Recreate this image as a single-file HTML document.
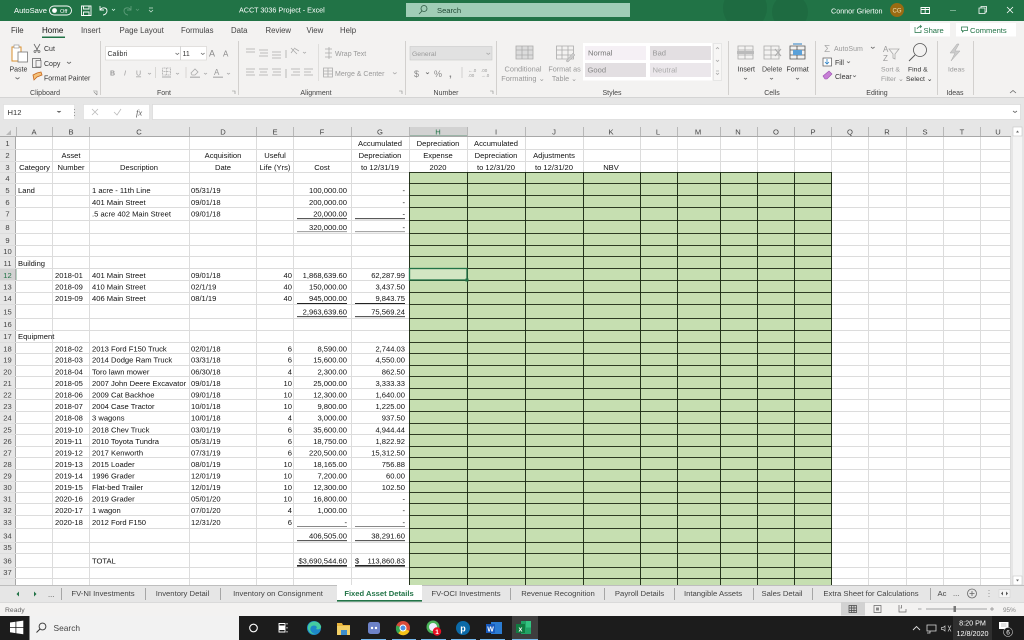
<!DOCTYPE html>
<html><head><meta charset="utf-8"><title>ACCT 3036 Project - Excel</title>
<style>
html,body{margin:0;padding:0;background:#fff}
svg{display:block;filter:blur(.35px)}
text{font-family:"Liberation Sans",sans-serif;font-size:7.6px;fill:#111}
.e{text-anchor:end}.m{text-anchor:middle}
.h text{fill:#444;text-anchor:middle;font-size:7.6px}
.rb text{fill:#333;font-size:7px}
.rb .d{fill:#999}
.gl text{fill:#444;text-anchor:middle;font-size:7px}
.tb text{fill:#444;text-anchor:middle;font-size:7.7px}
.ic{fill:none;stroke:#666;stroke-width:.8}
.dis{fill:none;stroke:#aaa;stroke-width:.8}
</style></head><body>
<svg width="1024" height="640" viewBox="0 0 1024 640" xmlns="http://www.w3.org/2000/svg">
<!-- backgrounds -->
<rect width="1024" height="640" fill="#fff"/>
<rect width="1024" height="21" fill="#217346"/>
<circle cx="745" cy="8" r="22" fill="#1e6b41"/><circle cx="790" cy="12" r="18" fill="#1e6b41"/>
<rect y="21" width="1024" height="76" fill="#f3f2f1"/>
<rect y="97" width="1024" height="40" fill="#e6e6e6"/>
<rect y="97" width="1024" height="1" fill="#d4d4d4"/>

<!-- title bar -->
<text x="14" y="13" style="fill:#fff;font-size:7.6px">AutoSave</text>
<rect x="49.5" y="6" width="22" height="9" rx="4.5" fill="none" stroke="#fff" stroke-width=".9"/>
<circle cx="54.5" cy="10.5" r="2.4" fill="#fff"/>
<text x="60" y="12.8" style="fill:#fff;font-size:5.6px">Off</text>
<path d="M81.5 6h9.500v9.500h-9.500zM83.500 6v3h5.500V6M83.500 15.500v-3.500h5.500v3.500" fill="none" stroke="#fff" stroke-width=".9"/>
<path d="M100 6v4h4M100 10c2-3 7-3 7 1 0 2-2 4-4 4" fill="none" stroke="#fff" stroke-width=".9"/>
<path d="M112 9l1.500 1.500 1.500-1.500" fill="none" stroke="#dfe" stroke-width=".7"/>
<path d="M131 6v4h-4M131 10c-2-3-7-3-7 1 0 2 2 4 4 4" fill="none" stroke="#5d9c79" stroke-width=".9"/>
<path d="M136 9l1.500 1.500 1.500-1.500" fill="none" stroke="#5d9c79" stroke-width=".7"/>
<path d="M149 8h4M149 10l2 2 2-2" fill="none" stroke="#cfe6d8" stroke-width=".7"/>
<text x="239" y="12.500" style="fill:#fff;font-size:7.2px">ACCT 3036 Project  -  Excel</text>
<rect x="406" y="3" width="224" height="14" fill="#a0cdb6"/>
<circle cx="424" cy="8.500" r="3" fill="none" stroke="#2d5a43" stroke-width=".8"/><path d="M422 11l-3 3" stroke="#2d5a43" stroke-width=".8"/>
<text x="437" y="13" style="fill:#234a36;font-size:7.6px">Search</text>
<text x="831" y="13.500" style="fill:#fff;font-size:7.200px">Connor Grierton</text>
<circle cx="897" cy="10" r="7" fill="#9a6b12"/>
<text x="897" y="12.500" class="m" style="fill:#f0e0b0;font-size:6px">CG</text>
<path d="M921 7.500h8.500v6H921zM925.200 7.500v6M921 9.500h8.500" fill="none" stroke="#fff" stroke-width=".9"/>
<path d="M950 10.500h6" stroke="#8fbfa3" stroke-width=".8"/>
<path d="M979 8h6v5.500h-6zM981 8V6.500h5.500V12H985" fill="none" stroke="#fff" stroke-width=".8"/>
<path d="M1007 7l6 6M1013 7l-6 6" stroke="#fff" stroke-width=".8"/>

<!-- menu tabs -->
<text x="11" y="33" style="font-size:7.800px;fill:#333">File</text>
<text x="42" y="33" style="font-size:8px;fill:#111">Home</text>
<text x="81" y="33" style="font-size:7.800px;fill:#444">Insert</text>
<text x="119.500" y="33" style="font-size:7.900px;fill:#444">Page Layout</text>
<text x="181" y="33" style="font-size:7.800px;fill:#444">Formulas</text>
<text x="231" y="33" style="font-size:7.800px;fill:#444">Data</text>
<text x="265.500" y="33" style="font-size:7.800px;fill:#444">Review</text>
<text x="306.500" y="33" style="font-size:7.800px;fill:#444">View</text>
<text x="340" y="33" style="font-size:7.800px;fill:#444">Help</text>
<rect x="42" y="36.500" width="23" height="1.500" fill="#217346"/>
<rect x="910" y="23" width="40" height="13.500" fill="#fff"/>
<path d="M915 27v5.500h6V30M917 29c1-2 2-2.500 4-2.500M920 25l1.500 1.500-1.500 1.500" fill="none" stroke="#217346" stroke-width=".7"/>
<text x="923.500" y="33" style="fill:#217346;font-size:7.600px">Share</text>
<rect x="956" y="23" width="60" height="13.500" fill="#fff"/>
<path d="M961.500 27h6v3.500h-3.500l-1.500 1.500v-1.500h-1z" fill="none" stroke="#217346" stroke-width=".7"/>
<text x="970" y="33" style="fill:#217346;font-size:7.600px">Comments</text>

<!-- ribbon separators -->
<path d="M100.500 41v54M238.500 41v54M405.500 41v54M496.500 41v54M728.500 41v54M815.500 41v54M937.500 41v54M973.500 41v54" stroke="#d2d0ce"/>
<g class="gl">
<text x="45" y="95">Clipboard</text><text x="164" y="95">Font</text><text x="316" y="95">Alignment</text><text x="446" y="95">Number</text>
<text x="612" y="95">Styles</text><text x="772" y="95">Cells</text><text x="877" y="95">Editing</text><text x="955" y="95">Ideas</text>
</g>
<path d="M93 91h4v4M94 92l3 3M232 91h3v3M399 91h3v3M490 91h3v3" fill="none" stroke="#888" stroke-width=".6"/>
<path d="M1010 93l3-2.500 3 2.500" fill="none" stroke="#666" stroke-width=".8"/>

<g class="rb">
<!-- clipboard -->
<path d="M12 47h9v14h-9z" fill="#fff" stroke="#d98f2c"/><rect x="14" y="45" width="5" height="3" fill="#fff" stroke="#888" stroke-width=".6"/>
<rect x="18" y="52" width="9.500" height="10" fill="#fff" stroke="#777" stroke-width=".8"/>
<text x="9.500" y="71.500">Paste</text><path d="M15.500 77.500l2 1.500 2-1.500" class="ic"/>
<path d="M34 44l4 7M40 44l-4 7" class="ic"/><circle cx="35" cy="51.500" r="1" class="ic"/><circle cx="39" cy="51.500" r="1" class="ic"/>
<text x="44" y="51">Cut</text>
<rect x="32.500" y="58.500" width="8" height="9" class="ic"/><rect x="36" y="60.500" width="5" height="6.500" fill="#f3f2f1" stroke="#666" stroke-width=".7"/>
<text x="44" y="66">Copy</text><path d="M67 62l2 1.500 2-1.500" class="ic"/>
<path d="M33 75l4-2 4-1 1 3-5 2-3 3z" fill="#f5c27a" stroke="#c7661c" stroke-width=".8"/>
<text x="44" y="80.500">Format Painter</text>
<!-- font -->
<rect x="105.500" y="46.500" width="101" height="13.500" fill="#fff" stroke="#d2d0ce" stroke-width=".6"/>
<text x="107.500" y="56" style="fill:#333">Calibri</text><path d="M175.500 53l1.800 1.500 1.800-1.500" class="ic"/>
<path d="M180.500 46.500v13.500" stroke="#bbb" stroke-width=".6"/>
<text x="182.500" y="56" style="fill:#333">11</text><path d="M201 53l1.800 1.500 1.800-1.500" class="ic"/>
<text x="209" y="56.500" style="font-size:9px;fill:#888">A</text><text x="223" y="56.500" style="font-size:8px;fill:#888">A</text>
<text x="110" y="75.500" style="font-weight:bold" class="d">B</text><text x="124" y="75.500" style="font-style:italic" class="d">I</text><text x="136" y="75.500" class="d" style="text-decoration:underline">U</text>
<path d="M148 73l1.500 1.200 1.500-1.200M176 73l1.500 1.200 1.500-1.200M204 73l1.500 1.200 1.500-1.200M227 73l1.500 1.200 1.500-1.200" class="dis"/>
<path d="M155.500 67v11M186 67v11" stroke="#d2d0ce" stroke-width=".8"/>
<path d="M162.500 68h8v7h-8zM162.500 71.500h8M166.500 68v7" class="dis" stroke-dasharray="1 .5"/><path d="M162 77h9" stroke="#aaa"/>
<path d="M191 73l4-4 3 3-3 3h-3z" class="dis"/><rect x="190" y="76.500" width="10" height="1.500" fill="#bbb"/>
<text x="214" y="75" class="d" style="font-size:8px">A</text><rect x="213" y="76.500" width="10" height="1.500" fill="#bbb"/>
<!-- alignment -->
<path d="M246 49h9M246 52h9M259 50h9M260 53h8M259 56h9M272 52h9M272 55h9M272 58h9M246 69h9M246 72h8M246 75h9M259 69h9M260 72h7M259 75h9M272 69h9M273 72h8M272 75h9M286 50v8M286 69v9" class="dis"/>
<path d="M291 48l6 6M294 48l5 3M291 53l3-4" class="dis"/><path d="M303 52l1.500 1.200 1.500-1.200" class="dis"/>
<path d="M291 69h9M293 72h7M291 75h9M304 69h9M304 72h7M304 75h9" class="dis"/>
<path d="M318.500 44v37" stroke="#d2d0ce" stroke-width=".6"/>
<path d="M325 49h7M325 53h7M325 57h7M329 47v12" class="dis"/>
<text x="335" y="56" class="d">Wrap Text</text>
<path d="M323.500 68h9v9h-9zM323.500 71h9M323.500 74h9M328 68v9" class="dis"/>
<text x="335" y="76" class="d">Merge &amp; Center</text><path d="M393 72.500l1.800 1.400 1.800-1.400" class="dis"/>
<!-- number -->
<rect x="410" y="46.500" width="82" height="13.500" fill="#e1e1e1" stroke="#c8c8c8" stroke-width=".6"/>
<text x="412" y="56" class="d" style="font-size:6.800px">General</text><path d="M486.500 53l1.800 1.400 1.800-1.400" class="dis"/>
<text x="414" y="77" style="font-size:9px;fill:#888">$</text><path d="M426 72.500l1.500 1.200 1.500-1.200" class="ic"/>
<text x="434" y="77" style="font-size:9px;fill:#888">%</text><text x="449" y="77" style="font-size:10px;fill:#888;font-weight:bold">,</text>
<path d="M462 67v11" stroke="#d2d0ce"/><text x="468" y="72" class="d" style="font-size:4.500px">←.0</text><text x="468" y="77" class="d" style="font-size:4.500px">.00</text><text x="481" y="72" class="d" style="font-size:4.500px">.00</text><text x="481" y="77" class="d" style="font-size:4.500px">→.0</text>
<!-- conditional, table -->
<path d="M516 46h17v13h-17zM516 50h17M516 55h17M522 46v13M528 46v13" fill="#dcdcdc" stroke="#aaa" stroke-width=".8"/>
<path d="M556.500 46h17v13h-17zM556.500 50h17M556.500 55h17M562 46v13M568 46v13" fill="none" stroke="#aaa" stroke-width=".8"/><path d="M566 61l7-8 2 2-7 7z" fill="#ccc" stroke="#aaa" stroke-width=".5"/>
<text x="523" y="71.500" class="d" style="text-anchor:middle;font-size:7.400px">Conditional</text>
<text x="523" y="81" class="d" style="text-anchor:middle;font-size:7.400px">Formatting ⌄</text>
<text x="564.500" y="71.500" class="d" style="text-anchor:middle;font-size:7.200px">Format as</text>
<text x="564.500" y="81" class="d" style="text-anchor:middle;font-size:7.200px">Table ⌄</text>
<!-- styles gallery -->
<rect x="583" y="43" width="129" height="37.500" fill="#fff"/>
<rect x="585" y="46" width="61" height="14" fill="#f5f0f5"/><rect x="650" y="46" width="61" height="14" fill="#e3dfe2"/>
<rect x="585" y="63" width="61" height="14" fill="#e3dfe2"/><rect x="650" y="63" width="61" height="14" fill="#ebe7eb"/>
<text x="588" y="55.500" style="font-size:7.600px;fill:#777">Normal</text><text x="652.500" y="55.500" style="font-size:7.600px;fill:#999">Bad</text>
<text x="587.500" y="72.500" style="font-size:7.600px;fill:#888">Good</text><text x="652.500" y="72.500" style="font-size:7.600px;fill:#aaa">Neutral</text>
<rect x="713.500" y="43.500" width="8" height="37" fill="#f7f6f5" stroke="#ddd" stroke-width=".6"/>
<path d="M716 49l1.500-1.500 1.500 1.500M716 60l1.500 1.500L719 60M716 71h3M716 73l1.500 1.500L719 73" class="dis"/>
<!-- cells -->
<path d="M738 46h15v13h-15zM738 50h15M738 55h15M745 46v13" fill="none" stroke="#aaa" stroke-width=".8"/><path d="M737 52.500h17" stroke="#bbb" stroke-width="3"/>
<path d="M764 46h15v13h-15zM764 50h15M764 55h15M771 46v13" fill="none" stroke="#aaa" stroke-width=".8"/><path d="M775 49l6 7M781 49l-6 7" stroke="#aaa"/>
<path d="M790 46h15v13h-15zM790 50h15M790 55h15M797 46v13" fill="none" stroke="#555" stroke-width=".8"/><rect x="793" y="50" width="9" height="5" fill="#5aa0d8"/><path d="M793 44h9" stroke="#2a7fc4"/>
<text x="737.500" y="71.500" style="fill:#333">Insert</text><text x="762" y="71.500" style="fill:#444">Delete</text><text x="786.500" y="71.500" style="fill:#333">Format</text>
<path d="M744 78l1.500 1.200 1.500-1.200M770 78l1.500 1.200 1.500-1.200M796 78l1.500 1.200 1.500-1.200" class="ic"/>
<!-- editing -->
<text x="824" y="52" style="font-size:10px;fill:#aaa">Σ</text><text x="834" y="51" class="d">AutoSum</text><path d="M871 47l1.800 1.400 1.800-1.400" class="ic"/>
<rect x="823" y="58" width="8.500" height="8" fill="#fff" stroke="#555" stroke-width=".7"/><path d="M827 59v5M825 62l2 2 2-2" fill="none" stroke="#2a7fc4" stroke-width=".8"/>
<text x="835" y="65" style="fill:#333">Fill</text><path d="M847 61.500l1.500 1.200 1.500-1.200" class="ic"/>
<path d="M823 76l6-5 3 3-5 5h-2z" fill="#c77fd6" stroke="#9a4fb0" stroke-width=".6"/>
<text x="835" y="79" style="fill:#333">Clear</text><path d="M853 75.500l1.500 1.200 1.500-1.200" class="ic"/>
<text x="883" y="52" class="d" style="font-size:8px">A</text><text x="883" y="61" class="d" style="font-size:8px">Z</text><path d="M889 49h10l-4 5v5l-2-1v-4z" class="dis"/>
<circle cx="920" cy="50" r="6.500" fill="none" stroke="#555" stroke-width=".8"/><path d="M915 55l-6 6" stroke="#555" stroke-width=".9"/>
<text x="881" y="71.500" class="d" style="font-size:6.800px">Sort &amp; </text><text x="908" y="71.500" style="fill:#333;font-size:6.800px">Find &amp;</text>
<text x="881" y="81" class="d" style="font-size:6.800px">Filter ⌄</text><text x="906" y="81" style="fill:#333;font-size:6.800px">Select ⌄</text>
<!-- ideas -->
<path d="M957 44l-7 9h5l-4 8 9-10h-5l4-7z" fill="#ccc" stroke="#aaa" stroke-width=".5"/>
<text x="948" y="71.500" class="d" style="font-size:6.800px">Ideas</text>
</g>

<!-- formula bar -->
<rect x="3.500" y="104.500" width="71" height="15" fill="#fff" stroke="#dcdcdc" stroke-width=".6"/>
<text x="7.500" y="115" style="fill:#333">H12</text><path d="M57 111l2 1.500 2-1.500" fill="#666" stroke="#666" stroke-width=".6"/>
<path d="M74.500 109v1M74.500 112v1M74.500 115v1" stroke="#999"/>
<rect x="83.500" y="104.500" width="66" height="15" fill="#fff" stroke="#dcdcdc" stroke-width=".6"/>
<rect x="152.500" y="104.500" width="868" height="15" fill="#fff" stroke="#d4d4d4" stroke-width=".6"/>
<path d="M92 109l6 6M98 109l-6 6" stroke="#bbb" stroke-width=".8"/><path d="M114 112l3 3 4-6" fill="none" stroke="#bbb" stroke-width=".8"/>
<text x="136" y="115.500" style="font-family:'Liberation Serif',serif;font-style:italic;font-size:8.600px;fill:#555">fx</text>
<path d="M1013 111l2 1.500 2-1.500" class="ic"/>

<!-- sheet -->
<rect x="0" y="127" width="1024" height="10" fill="#e6e6e6"/>
<rect x="0" y="137" width="16" height="448" fill="#e6e6e6"/>
<rect x="1011" y="127" width="13" height="458" fill="#e6e6e6"/>
<rect x="1013" y="127" width="9" height="458" fill="#f4f4f4"/>
<rect x="1013" y="127" width="9" height="9" fill="#fff" stroke="#bbb" stroke-width=".5"/><rect x="1013" y="576" width="9" height="9" fill="#fff" stroke="#bbb" stroke-width=".5"/>
<path d="M1016 132.500h3l-1.500-2zM1016 579.500h3l-1.500 2z" fill="#666"/>
<!-- col highlights -->
<rect x="409" y="127" width="58" height="10" fill="#d2d2d2"/><rect x="409" y="135.700" width="58" height="1.300" fill="#217346"/>
<rect x="0" y="268" width="16" height="12" fill="#d2d2d2"/><rect x="15" y="268" width="1.300" height="12" fill="#217346"/>
<!-- header separators -->
<path d="M16.500 127v10M52.500 127v10M89.500 127v10M189.500 127v10M256.500 127v10M293.500 127v10M351.500 127v10M409.500 127v10M467.500 127v10M525.500 127v10M583.500 127v10M640.500 127v10M677.500 127v10M720.500 127v10M757.500 127v10M794.500 127v10M831.500 127v10M868.500 127v10M906.500 127v10M943.500 127v10M980.500 127v10" stroke="#b8b8b8"/>
<path d="M0 136.500H1011M15.500 137V585" stroke="#a8a8a8"/>
<path d="M6 135l5-5v5z" fill="#b9b9b9"/>
<g class="h">
<text x="34" y="134.500">A</text><text x="71" y="134.500">B</text><text x="139" y="134.500">C</text><text x="223" y="134.500">D</text><text x="275" y="134.500">E</text><text x="322" y="134.500">F</text><text x="380" y="134.500">G</text><text x="438" y="134.500" style="fill:#217346">H</text><text x="496" y="134.500">I</text><text x="554" y="134.500">J</text><text x="611" y="134.500">K</text><text x="658" y="134.500">L</text><text x="698" y="134.500">M</text><text x="738" y="134.500">N</text><text x="776" y="134.500">O</text><text x="813" y="134.500">P</text><text x="850" y="134.500">Q</text><text x="887" y="134.500">R</text><text x="925" y="134.500">S</text><text x="962" y="134.500">T</text><text x="998" y="134.500">U</text>
</g>
<!-- grid -->
<path stroke="#dcdcdc" d="M52.500 137V585M89.500 137V585M189.500 137V585M256.500 137V585M293.500 137V585M351.500 137V585M409.500 137V172M467.500 137V172M525.500 137V172M583.500 137V172M640.500 137V172M677.500 137V172M720.500 137V172M757.500 137V172M794.500 137V172M868.500 137V585M906.500 137V585M943.500 137V585M980.500 137V585M1010.500 137V585M831.500 137V172"/>
<path stroke="#dcdcdc" d="M0 149.500H1011M0 161.500H1011M0 172.500H1011M0 183.500H409M0 195.500H409M0 207.500H409M0 220.500H409M0 233.500H409M0 245.500H409M0 256.500H409M0 268.500H409M0 280.500H409M0 292.500H409M0 304.500H409M0 318.500H409M0 330.500H409M0 342.500H409M0 353.500H409M0 365.500H409M0 376.500H409M0 388.500H409M0 399.500H409M0 411.500H409M0 423.500H409M0 434.500H409M0 446.500H409M0 457.500H409M0 469.500H409M0 481.500H409M0 492.500H409M0 503.500H409M0 515.500H409M0 528.500H409M0 542.500H409M0 553.500H409M0 567.500H409M0 578.500H409"/>
<path stroke="#dcdcdc" d="M832 183.500H1011M832 195.500H1011M832 207.500H1011M832 220.500H1011M832 233.500H1011M832 245.500H1011M832 256.500H1011M832 268.500H1011M832 280.500H1011M832 292.500H1011M832 304.500H1011M832 318.500H1011M832 330.500H1011M832 342.500H1011M832 353.500H1011M832 365.500H1011M832 376.500H1011M832 388.500H1011M832 399.500H1011M832 411.500H1011M832 423.500H1011M832 434.500H1011M832 446.500H1011M832 457.500H1011M832 469.500H1011M832 481.500H1011M832 492.500H1011M832 503.500H1011M832 515.500H1011M832 528.500H1011M832 542.500H1011M832 553.500H1011M832 567.500H1011M832 578.500H1011"/>
<rect x="409" y="172" width="422.500" height="413" fill="#c6dfb1"/>
<path stroke="#1c2a14" stroke-opacity=".95" d="M409.500 172V585M467.500 172V585M525.500 172V585M583.500 172V585M640.500 172V585M677.500 172V585M720.500 172V585M757.500 172V585M794.500 172V585M831.500 172V585"/>
<path stroke="#1c2a14" stroke-opacity=".9" d="M409 172.500H832M409 183.500H832M409 195.500H832M409 207.500H832M409 220.500H832M409 233.500H832M409 245.500H832M409 256.500H832M409 268.500H832M409 280.500H832M409 292.500H832M409 304.500H832M409 318.500H832M409 330.500H832M409 342.500H832M409 353.500H832M409 365.500H832M409 376.500H832M409 388.500H832M409 399.500H832M409 411.500H832M409 423.500H832M409 434.500H832M409 446.500H832M409 457.500H832M409 469.500H832M409 481.500H832M409 492.500H832M409 503.500H832M409 515.500H832M409 528.500H832M409 542.500H832M409 553.500H832M409 567.500H832M409 578.500H832"/>
<rect x="409.500" y="268.500" width="57.500" height="11.500" fill="#d3e6c3" stroke="#217346" stroke-width="1.300"/>
<rect x="465.500" y="278.500" width="3" height="3" fill="#217346"/>
<!-- accounting underlines -->
<path stroke="#222" stroke-width=".9" d="M297 218.700h50M355 218.700h50M297 303.500h50M355 303.500h50M297 316.700h50M355 316.700h50M297 540.700h50M355 540.700h50"/>
<path stroke="#888" stroke-width=".9" d="M297 231.700h50M355 231.700h50M297 526.500h50M355 526.500h50"/>
<path stroke="#222" stroke-width="1.600" d="M297 565.800h50M355 565.800h50"/>
<!-- row numbers -->
<g class="h">
<text x="7.500" y="146">1</text><text x="7.500" y="158">2</text><text x="7.500" y="170">3</text><text x="7.500" y="181">4</text><text x="7.500" y="193">5</text><text x="7.500" y="205">6</text><text x="7.500" y="216.500">7</text><text x="7.500" y="230">8</text><text x="7.500" y="243">9</text><text x="7.500" y="254">10</text><text x="7.500" y="266">11</text><text x="7.500" y="278" style="fill:#217346">12</text><text x="7.500" y="289.500">13</text><text x="7.500" y="301">14</text><text x="7.500" y="314.500">15</text><text x="7.500" y="327">16</text><text x="7.500" y="339">17</text><text x="7.500" y="351.500">18</text><text x="7.500" y="362.500">19</text><text x="7.500" y="374.500">20</text><text x="7.500" y="386">21</text><text x="7.500" y="397.500">22</text><text x="7.500" y="409">23</text><text x="7.500" y="420.500">24</text><text x="7.500" y="432.500">25</text><text x="7.500" y="444">26</text><text x="7.500" y="455.500">27</text><text x="7.500" y="467">28</text><text x="7.500" y="478.500">29</text><text x="7.500" y="490">30</text><text x="7.500" y="501.500">31</text><text x="7.500" y="513">32</text><text x="7.500" y="525">33</text><text x="7.500" y="538.500">34</text><text x="7.500" y="550">35</text><text x="7.500" y="563.500">36</text><text x="7.500" y="575">37</text>
</g>
<!-- header text -->
<text x="71" y="158" class="m">Asset</text><text x="71" y="170" class="m">Number</text><text x="34.500" y="170" class="m">Category</text><text x="139" y="170" class="m">Description</text>
<text x="223" y="158" class="m">Acquisition</text><text x="223" y="170" class="m">Date</text><text x="275" y="158" class="m">Useful</text><text x="275" y="170" class="m">Life (Yrs)</text><text x="322" y="170" class="m">Cost</text>
<text x="380" y="146" class="m">Accumulated</text><text x="380" y="158" class="m">Depreciation</text><text x="380" y="170" class="m">to 12/31/19</text>
<text x="438" y="146" class="m">Depreciation</text><text x="438" y="158" class="m">Expense</text><text x="438" y="170" class="m">2020</text>
<text x="496" y="146" class="m">Accumulated</text><text x="496" y="158" class="m">Depreciation</text><text x="496" y="170" class="m">to 12/31/20</text>
<text x="554" y="158" class="m">Adjustments</text><text x="554" y="170" class="m">to 12/31/20</text><text x="611" y="170" class="m">NBV</text>
<!-- data -->
<text x="18" y="193">Land</text><text x="18" y="266">Building</text><text x="18" y="339">Equipment</text>
<text x="92" y="193">1 acre - 11th Line</text><text x="191" y="193">05/31/19</text><text x="347" y="193" class="e">100,000.00</text><text x="405" y="193" class="e">-</text>
<text x="92" y="205">401 Main Street</text><text x="191" y="205">09/01/18</text><text x="347" y="205" class="e">200,000.00</text><text x="405" y="205" class="e">-</text>
<text x="92" y="216.500">.5 acre 402 Main Street</text><text x="191" y="216.500">09/01/18</text><text x="347" y="216.500" class="e">20,000.00</text><text x="405" y="216.500" class="e">-</text>
<text x="347" y="230" class="e">320,000.00</text><text x="405" y="230" class="e">-</text>

<text x="55" y="278">2018-01</text><text x="92" y="278">401 Main Street</text><text x="191" y="278">09/01/18</text><text x="292" y="278" class="e">40</text><text x="347" y="278" class="e">1,868,639.60</text><text x="405" y="278" class="e">62,287.99</text>
<text x="55" y="289.500">2018-09</text><text x="92" y="289.500">410 Main Street</text><text x="191" y="289.500">02/1/19</text><text x="292" y="289.500" class="e">40</text><text x="347" y="289.500" class="e">150,000.00</text><text x="405" y="289.500" class="e">3,437.50</text>
<text x="55" y="301">2019-09</text><text x="92" y="301">406 Main Street</text><text x="191" y="301">08/1/19</text><text x="292" y="301" class="e">40</text><text x="347" y="301" class="e">945,000.00</text><text x="405" y="301" class="e">9,843.75</text>
<text x="347" y="314.500" class="e">2,963,639.60</text><text x="405" y="314.500" class="e">75,569.24</text>

<text x="55" y="351.500">2018-02</text><text x="92" y="351.500">2013 Ford F150 Truck</text><text x="191" y="351.500">02/01/18</text><text x="292" y="351.500" class="e">6</text><text x="347" y="351.500" class="e">8,590.00</text><text x="405" y="351.500" class="e">2,744.03</text>
<text x="55" y="362.500">2018-03</text><text x="92" y="362.500">2014 Dodge Ram Truck</text><text x="191" y="362.500">03/31/18</text><text x="292" y="362.500" class="e">6</text><text x="347" y="362.500" class="e">15,600.00</text><text x="405" y="362.500" class="e">4,550.00</text>
<text x="55" y="374.500">2018-04</text><text x="92" y="374.500">Toro lawn mower</text><text x="191" y="374.500">06/30/18</text><text x="292" y="374.500" class="e">4</text><text x="347" y="374.500" class="e">2,300.00</text><text x="405" y="374.500" class="e">862.50</text>
<text x="55" y="386">2018-05</text><text x="92" y="386">2007 John Deere Excavator</text><text x="191" y="386">09/01/18</text><text x="292" y="386" class="e">10</text><text x="347" y="386" class="e">25,000.00</text><text x="405" y="386" class="e">3,333.33</text>
<text x="55" y="397.500">2018-06</text><text x="92" y="397.500">2009 Cat Backhoe</text><text x="191" y="397.500">09/01/18</text><text x="292" y="397.500" class="e">10</text><text x="347" y="397.500" class="e">12,300.00</text><text x="405" y="397.500" class="e">1,640.00</text>
<text x="55" y="409">2018-07</text><text x="92" y="409">2004 Case Tractor</text><text x="191" y="409">10/01/18</text><text x="292" y="409" class="e">10</text><text x="347" y="409" class="e">9,800.00</text><text x="405" y="409" class="e">1,225.00</text>
<text x="55" y="420.500">2018-08</text><text x="92" y="420.500">3 wagons</text><text x="191" y="420.500">10/01/18</text><text x="292" y="420.500" class="e">4</text><text x="347" y="420.500" class="e">3,000.00</text><text x="405" y="420.500" class="e">937.50</text>
<text x="55" y="432.500">2019-10</text><text x="92" y="432.500">2018 Chev Truck</text><text x="191" y="432.500">03/01/19</text><text x="292" y="432.500" class="e">6</text><text x="347" y="432.500" class="e">35,600.00</text><text x="405" y="432.500" class="e">4,944.44</text>
<text x="55" y="444">2019-11</text><text x="92" y="444">2010 Toyota Tundra</text><text x="191" y="444">05/31/19</text><text x="292" y="444" class="e">6</text><text x="347" y="444" class="e">18,750.00</text><text x="405" y="444" class="e">1,822.92</text>
<text x="55" y="455.500">2019-12</text><text x="92" y="455.500">2017 Kenworth</text><text x="191" y="455.500">07/31/19</text><text x="292" y="455.500" class="e">6</text><text x="347" y="455.500" class="e">220,500.00</text><text x="405" y="455.500" class="e">15,312.50</text>
<text x="55" y="467">2019-13</text><text x="92" y="467">2015 Loader</text><text x="191" y="467">08/01/19</text><text x="292" y="467" class="e">10</text><text x="347" y="467" class="e">18,165.00</text><text x="405" y="467" class="e">756.88</text>
<text x="55" y="478.500">2019-14</text><text x="92" y="478.500">1996 Grader</text><text x="191" y="478.500">12/01/19</text><text x="292" y="478.500" class="e">10</text><text x="347" y="478.500" class="e">7,200.00</text><text x="405" y="478.500" class="e">60.00</text>
<text x="55" y="490">2019-15</text><text x="92" y="490">Flat-bed Trailer</text><text x="191" y="490">12/01/19</text><text x="292" y="490" class="e">10</text><text x="347" y="490" class="e">12,300.00</text><text x="405" y="490" class="e">102.50</text>
<text x="55" y="501.500">2020-16</text><text x="92" y="501.500">2019 Grader</text><text x="191" y="501.500">05/01/20</text><text x="292" y="501.500" class="e">10</text><text x="347" y="501.500" class="e">16,800.00</text><text x="405" y="501.500" class="e">-</text>
<text x="55" y="513">2020-17</text><text x="92" y="513">1 wagon</text><text x="191" y="513">07/01/20</text><text x="292" y="513" class="e">4</text><text x="347" y="513" class="e">1,000.00</text><text x="405" y="513" class="e">-</text>
<text x="55" y="525">2020-18</text><text x="92" y="525">2012 Ford F150</text><text x="191" y="525">12/31/20</text><text x="292" y="525" class="e">6</text><text x="347" y="525" class="e">-</text><text x="405" y="525" class="e">-</text>
<text x="347" y="538.500" class="e">406,505.00</text><text x="405" y="538.500" class="e">38,291.60</text>
<text x="92" y="563.500">TOTAL</text><text x="347" y="563.500" class="e">$3,690,544.60</text><text x="355" y="563.500">$</text><text x="405" y="563.500" class="e">113,860.83</text>

<!-- sheet tabs -->
<rect y="585" width="1024" height="17" fill="#e6e6e6"/><rect y="585" width="337" height=".8" fill="#b5b5b5"/><rect x="421" y="585" width="603" height=".8" fill="#b5b5b5"/>
<rect x="337" y="585" width="85" height="16.500" fill="#fff"/><rect x="337" y="600" width="85" height="1.600" fill="#217346"/>
<path d="M19 591.500v5l-2.500-2.500zM34 591.500v5l2.500-2.500z" fill="#217346"/>
<text x="48" y="597" style="fill:#444">...</text>
<path d="M61.500 588v12M145.500 588v12M220.500 588v12M510.500 588v12M604.500 588v12M674.500 588v12M753.500 588v12M812.500 588v12M930.500 588v12" stroke="#a6a6a6"/>
<g class="tb">
<text x="103" y="596">FV-NI Investments</text><text x="182.500" y="596">Inventory Detail</text><text x="278" y="596">Inventory on Consignment</text>
<text x="379" y="596" style="fill:#217346;font-weight:bold;font-size:7.600px">Fixed Asset Details</text>
<text x="466" y="596">FV-OCI Investments</text><text x="558" y="596">Revenue Recognition</text><text x="639.500" y="596">Payroll Details</text><text x="713" y="596">Intangible Assets</text><text x="782" y="596">Sales Detail</text><text x="871" y="596">Extra Sheet for Calculations</text><text x="942" y="596">Ac</text>
</g>
<text x="953" y="596" style="fill:#444">...</text>
<circle cx="972" cy="593.500" r="4.500" fill="none" stroke="#666" stroke-width=".8"/><path d="M969.500 593.500h5M972 591v5" stroke="#666" stroke-width=".8"/>
<path d="M989 590v1M989 593v1M989 596v1" stroke="#999"/>
<rect x="999" y="589.500" width="11" height="8" fill="#f5f5f5" stroke="#ccc" stroke-width=".5"/><path d="M1003 591.500v4l-2-2zM1006 591.500v4l2-2z" fill="#555"/>

<!-- status bar -->
<rect y="602" width="1024" height="14" fill="#f3f2f1"/><rect y="602" width="1024" height=".7" fill="#d0d0d0"/>
<text x="5" y="612" style="fill:#666;font-size:6.800px">Ready</text>
<rect x="841" y="602.500" width="24" height="13" fill="#d2d2d2"/>
<path d="M849 605.500h7.500v7H849zM849 608h7.500M849 610.500h7.500M851.500 605.500v7M854 605.500v7" fill="none" stroke="#444" stroke-width=".7"/>
<path d="M874 605.500h7v7h-7z" fill="none" stroke="#666" stroke-width=".7"/><rect x="876" y="607.500" width="3" height="3" fill="#888"/>
<path d="M899 605v7h7v-3" fill="none" stroke="#666" stroke-width=".7"/><path d="M901.500 605v3h-1" fill="none" stroke="#666" stroke-width=".7"/>
<path d="M918 609h3.500M926 609h61M990 609h4M992 607v4" stroke="#888" stroke-width=".7"/><rect x="953.500" y="606" width="2.500" height="6" fill="#777"/>
<text x="1003" y="612" style="fill:#888;font-size:6.400px">95%</text>

<!-- taskbar -->
<rect y="616" width="1024" height="24" fill="#1c1c1c"/>
<path d="M10 622.500l5.500-.8v5.300H10zM16.300 621.600l7-1v6.400h-7zM10 627.800h5.500v5.300l-5.500-.8zM16.300 627.800h7v6.400l-7-1z" fill="#fff"/>
<rect x="29.500" y="616" width="209.500" height="24" fill="#f2f2f2"/>
<circle cx="42.500" cy="626.500" r="3.400" fill="none" stroke="#333" stroke-width=".9"/><path d="M40 629l-3.500 3.500" stroke="#333"/>
<text x="53.500" y="631" style="fill:#444;font-size:8.400px">Search</text>
<circle cx="253.500" cy="628" r="3.800" fill="none" stroke="#fff" stroke-width="1.100"/>
<path d="M279 623.500h6v8.500h-6zM287 623v1.500M287 627v1.500M287 631v1.500" fill="none" stroke="#fff" stroke-width=".9"/><path d="M279 625.500h6v4.500h-6z" fill="#fff"/>
<!-- edge -->
<circle cx="314" cy="628" r="7" fill="#1d88c9"/><path d="M308 626c2-6 11-6 13 0 1 3-3 4-5 3 3-3-3-5-5-2-2 3 1 7 5 7-5 1-9-3-8-8z" fill="#44cba0"/>
<!-- folder -->
<path d="M337 623h5l1 2h7v10h-13z" fill="#e8b43c"/><rect x="337" y="626" width="13" height="9" fill="#f2cf66"/><rect x="341" y="630" width="6" height="5" fill="#3d8ecb"/>
<!-- discord -->
<rect x="368" y="622" width="12" height="12" rx="2.500" fill="#6d82c8"/><circle cx="372" cy="628" r="1.200" fill="#fff"/><circle cx="376" cy="628" r="1.200" fill="#fff"/>
<!-- chrome -->
<circle cx="403" cy="628" r="7" fill="#d94a3a"/><path d="M403 628L409.500 631A7 7 0 0 1 398 633L403 628z" fill="#f5c31a"/><path d="M403 628L398 633.500A7 7 0 0 1 396.500 625.500z" fill="#34a853"/><circle cx="403" cy="628" r="3" fill="#4d8fe6" stroke="#fff"/>
<!-- whatsapp -->
<circle cx="433" cy="627" r="6.500" fill="#4ab45a"/><circle cx="433" cy="627" r="4" fill="#eef"/>
<circle cx="437" cy="631.500" r="4.200" fill="#e81123"/><text x="437" y="634" class="m" style="fill:#fff;font-size:6.500px;font-weight:bold">1</text>
<!-- p -->
<circle cx="463" cy="628" r="7" fill="#0b6aa8"/><text x="463" y="631.500" class="m" style="fill:#fff;font-size:9px;font-weight:bold">p</text>
<!-- word -->
<rect x="491" y="622" width="11" height="12" fill="#2b7cd3"/><rect x="486" y="624" width="9" height="9" fill="#185abd"/><text x="490.500" y="631.500" class="m" style="fill:#fff;font-size:7px;font-weight:bold">W</text>
<!-- excel -->
<rect x="512" y="616" width="26" height="24" fill="#3e3e3e"/>
<rect x="521" y="621" width="10" height="13" fill="#21a366"/><rect x="526" y="621" width="5" height="6.500" fill="#33c481"/><rect x="516" y="624" width="9" height="9" fill="#107c41"/><text x="520.500" y="631.500" class="m" style="fill:#fff;font-size:7px;font-weight:bold">x</text>
<!-- app underlines -->
<path d="M361 639.500h25M392 639.500h24M421 639.500h25M451 639.500h25M480 639.500h25M512 639.500h26" stroke="#76b9ed" stroke-width="1"/>
<!-- tray -->
<path d="M913 630l3.500-3.500 3.500 3.500" fill="none" stroke="#ddd" stroke-width=".9"/>
<path d="M927 625h9v6h-9zM930 631v2h-3" fill="none" stroke="#ddd" stroke-width=".8"/>
<path d="M945 626v5l-2-1.500h-1.500v-2h1.500zM948 625.500l3 6M951 625.500l-3 6" fill="none" stroke="#ccc" stroke-width=".7"/>
<rect x="953" y="616" width="39" height="24" fill="#2f2f2f"/>
<text x="972.500" y="625.500" class="m" style="fill:#fff;font-size:7.200px">8:20 PM</text><text x="972.500" y="636" class="m" style="fill:#fff;font-size:7.200px">12/8/2020</text>
<path d="M999 622h9.500v7h-9.500z" fill="#fff"/><path d="M1001 624h5.500M1001 626h5.500" stroke="#888" stroke-width=".6"/>
<circle cx="1008" cy="632" r="4.500" fill="#1c1c1c" stroke="#ccc" stroke-width=".6"/><text x="1008" y="634.500" class="m" style="fill:#fff;font-size:6.500px">6</text>
</svg>
</body></html>
